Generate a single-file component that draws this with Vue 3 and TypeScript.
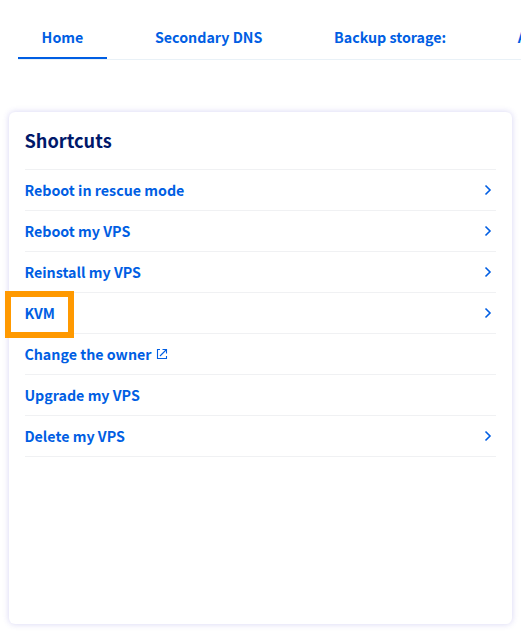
<script setup lang="ts">
interface Tab {
  label: string
  active?: boolean
}

interface Shortcut {
  label: string
  chevron?: boolean
  external?: boolean
  highlighted?: boolean
}

const tabs: Tab[] = [
  { label: 'Home', active: true },
  { label: 'Secondary DNS' },
  { label: 'Backup storage:' },
  { label: 'A' },
]

const shortcuts: Shortcut[] = [
  { label: 'Reboot in rescue mode', chevron: true },
  { label: 'Reboot my VPS', chevron: true },
  { label: 'Reinstall my VPS', chevron: true },
  { label: 'KVM', chevron: true, highlighted: true },
  { label: 'Change the owner', external: true },
  { label: 'Upgrade my VPS' },
  { label: 'Delete my VPS', chevron: true },
]
</script>

<template>
  <div class="page">
    <nav class="tabs">
      <a v-for="tab in tabs" :key="tab.label" class="tab" :class="{ active: tab.active }">{{ tab.label }}</a>
    </nav>
    <section class="card">
      <h2 class="title">Shortcuts</h2>
      <ul class="list">
        <li v-for="item in shortcuts" :key="item.label" class="row" :class="{ highlighted: item.highlighted }">
          <a class="link">{{ item.label }}</a>
          <svg v-if="item.external" class="external" width="12" height="12" viewBox="0 0 12 12">
            <path d="M4 1.5H1.5v9h9V8M6.5 1.5h4v4M10.5 1.5L4 8" />
          </svg>
          <svg v-if="item.chevron" class="chevron" width="8" height="12" viewBox="0 0 8 12">
            <path d="M1.5 1.5L6 6L1.5 10.5" />
          </svg>
        </li>
      </ul>
    </section>
  </div>
</template>

<style>
body {
  background: #fff;
}
</style>

<style scoped>
.page {
  box-sizing: border-box;
  width: 521px;
  height: 632px;
  padding-top: 17px;
  overflow: hidden;
  background: #fff;
  font-family: "Noto Sans CJK SC", "Open Sans", sans-serif;
  font-weight: 700;
  font-size: 14.25px;
  color: #005ee3;
}

.tabs {
  display: flex;
  gap: 24px;
  box-sizing: border-box;
  height: 43px;
  margin-left: 18px;
  border-bottom: 1px solid #e9f1f7;
}

.tab {
  flex: none;
  box-sizing: border-box;
  height: 42px;
  padding: 0 24px 0 23.6px;
  line-height: 40px;
  white-space: nowrap;
}

.tab.active {
  border-bottom: 2px solid #005ee3;
}

.card {
  box-sizing: border-box;
  width: 503px;
  height: 512px;
  margin: 52px 0 0 9px;
  padding: 0 16px;
  border-radius: 6px;
  box-shadow: 0 0 6px rgba(70, 60, 200, 0.22);
}

.title {
  margin: 0 0 0 -0.6px;
  height: 57px;
  line-height: 57px;
  font-size: 18.2px;
  font-weight: 700;
  color: #00186a;
}

.list {
  margin: 0;
  padding: 0;
  list-style: none;
  border-top: 1px solid #f0f1f3;
}

.row {
  position: relative;
  display: flex;
  align-items: center;
  box-sizing: border-box;
  height: 41px;
  border-bottom: 1px solid #f0f1f3;
}

.link {
  margin-left: -0.6px;
  line-height: 40px;
  white-space: nowrap;
}

.row.highlighted::after {
  content: "";
  position: absolute;
  left: -20px;
  top: -2px;
  box-sizing: border-box;
  width: 69px;
  height: 47px;
  border: 6px solid #ff9900;
}

.external,
.chevron {
  fill: none;
  stroke: #005ee3;
}

.external {
  margin-left: 4px;
  stroke-width: 1.1;
}

.chevron {
  margin-left: auto;
  margin-right: 4px;
  stroke-width: 1.6;
}
</style>
